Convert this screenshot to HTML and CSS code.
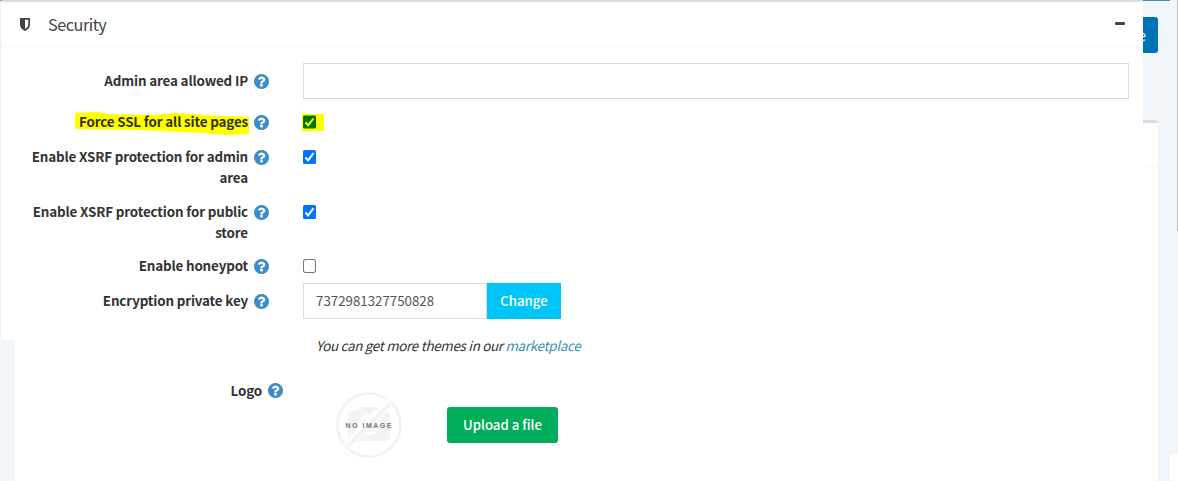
FILE: index.html
```html
<!DOCTYPE html>
<html lang="en">
<head>
<meta charset="utf-8">
<title>Security settings</title>
<link rel="stylesheet" href="styles.css">
</head>
<body>
<svg class="defs" width="0" height="0">
  <symbol id="help" viewBox="0 0 1536 1536"><path d="M896 1248v-192q0-14-9-23t-23-9H672q-14 0-23 9t-9 23v192q0 14 9 23t23 9h192q14 0 23-9t9-23zm256-672q0-88-55.500-163T958 297t-170-41q-243 0-371 213-15 24 8 42l132 100q7 6 19 6 16 0 25-12 53-68 86-92 34-24 86-24 48 0 85.500 26t37.500 59q0 38-20 61t-68 45q-63 28-115.500 86.500T640 892v36q0 14 9 23t23 9h192q14 0 23-9t9-23q0-19 21.500-49.500T972 829q32-18 49-28.500t46-35 44.500-48 28-60.500 12.500-81zm384 192q0 209-103 385.500T1153.500 1433 768 1536t-385.500-103T103 1153.500 0 768t103-385.500T382.500 103 768 0t385.500 103T1433 382.500 1536 768z" fill="#3c8dc5"/></symbol>
</svg>
<div class="page">
  <div class="topbar"></div>
  <div class="save">Save</div>
  <main class="card">
    <div class="card-head"></div>
    <div class="card-body">
      <p class="hint">You can get more themes in our <a class="link">marketplace</a></p>
      <div class="logo-row">
        <span class="label logo-label">Logo</span>
        <svg class="help"><use href="#help"/></svg>
        <svg class="noimage" viewBox="0 0 66 66">
          <circle cx="33" cy="33" r="31.500" fill="none" stroke="#f3f3f3" stroke-width="3"/>
          <path d="M12 23q0-4 4-4h3l3-4h20l3 4h5q4 0 4 4v22q0 4-4 4H16q-4 0-4-4z" fill="#f3f3f3"/>
          <circle cx="33" cy="33" r="9" fill="none" stroke="#fff" stroke-width="3"/>
          <path d="M10 54L54 10" stroke="#fff" stroke-width="9"/>
          <path d="M11 55L55 11" stroke="#f3f3f3" stroke-width="4"/>
          <text class="noimage-text" x="32.500" y="35.500" text-anchor="middle" textLength="46">NO IMAGE</text>
        </svg>
        <button class="upload">Upload a file</button>
      </div>
    </div>
  </main>
  <div class="scroll"></div>
</div>
<section class="panel">
  <header class="panel-head">
    <svg class="shield" viewBox="0 0 10 13"><path d="M0 0h10v6.500q0 4-5 6.500-5-2.500-5-6.500z" fill="#444"/><path d="M5 1.700h3.300v4.800q0 2.700-3.300 4.600z" fill="#fff"/></svg>
    <h1 class="title">Security</h1>
    <span class="minus"></span>
  </header>
  <div class="form">
    <div class="row row-input"><label class="label">Admin area allowed IP</label><svg class="help"><use href="#help"/></svg><div class="input wide"></div></div>
    <div class="row row-ssl"><label class="label"><svg class="marker" viewBox="0 0 175 24" preserveAspectRatio="none"><path d="M0 1L25 0 32 2 76 3 103 1 129 3 174 5V22L151 23 128 21 66 18 0 17z" fill="#ff0"/></svg><span class="marked">Force SSL for all site pages</span></label><svg class="help"><use href="#help"/></svg><span class="check-mark"><svg class="check" viewBox="0 0 13 13"><rect width="13" height="13" rx="1.500" fill="#007500"/><path d="M2.500 7l2.600 2.700L10.500 3" fill="none" stroke="#ff0" stroke-width="1.900"/></svg></span></div>
    <div class="row row-admin"><label class="label">Enable XSRF protection for admin<br>area</label><svg class="help"><use href="#help"/></svg><svg class="check" viewBox="0 0 13 13" preserveAspectRatio="none"><rect width="13" height="13" rx="1.500" fill="#0075ff"/><path d="M2.500 7l2.600 2.700L10.500 3" fill="none" stroke="#fff" stroke-width="1.900"/></svg></div>
    <div class="row row-public"><label class="label">Enable XSRF protection for public<br>store</label><svg class="help"><use href="#help"/></svg><svg class="check" viewBox="0 0 13 13" preserveAspectRatio="none"><rect width="13" height="13" rx="1.500" fill="#0075ff"/><path d="M2.500 7l2.600 2.700L10.500 3" fill="none" stroke="#fff" stroke-width="1.900"/></svg></div>
    <div class="row row-honey"><label class="label">Enable honeypot</label><svg class="help"><use href="#help"/></svg><svg class="check" viewBox="0 0 13 13" preserveAspectRatio="none"><rect x=".5" y=".5" width="12" height="12" rx="2" fill="#fff" stroke="#767676"/></svg></div>
    <div class="row row-key"><label class="label">Encryption private key</label><svg class="help"><use href="#help"/></svg><div class="group"><div class="input key">7372981327750828</div><button class="change">Change</button></div></div>
  </div>
</section>
</body>
</html>
```
FILE: styles.css
```css
* { box-sizing: border-box; }
body {
  margin: 0; width: 1178px; height: 481px; overflow: hidden; position: relative;
  font-family: "Noto Sans CJK SC", "Noto Sans", sans-serif;
  font-size: 13.400px; line-height: 21px; color: #333;
}
.defs { position: absolute; }
.page { height: 481px; background: #f1f6fa; display: flex; flex-direction: column; overflow: hidden; }
.topbar { height: 1px; width: 1170px; background: #3c8dbc; flex: none; }
.save {
  margin: 16px 0 0 1098px; width: 60px; height: 36px; flex: none;
  background: #0073b7; border-radius: 3px; color: #fff; line-height: 36px; text-align: right; padding-right: 12px;
}
.card {
  margin: 67px 20px 0 15px; flex: 1; background: #fff;
  border-top: 3px solid #d8dbe4; border-radius: 3px 3px 0 0;
}
.card-head { height: 44px; border-bottom: 1px solid #f7f7f7; }
.card-body { padding: 168px 0 0; }
.hint { margin: 0 0 0 301px; font-style: italic; letter-spacing: -.3px; white-space: nowrap; }
.link { color: #3c8dbc; }
.logo-row { display: flex; align-items: flex-start; padding-top: 24px; }
.label { font-weight: 700; text-align: right; white-space: nowrap; color: #333; letter-spacing: -.15px; }
.logo-label { width: 247px; margin-right: 6px; }
.help { width: 15px; height: 15px; margin-top: 3px; flex: none; }
.noimage { width: 66px; height: 66px; margin: 12px 0 0 53px; flex: none; }
.noimage-text { font: 700 7px "Liberation Sans", sans-serif; fill: #777; }
.upload {
  width: 111px; height: 36px; margin: 27px 0 0 45px; padding: 0; border: 0; border-radius: 3px;
  background: #00ad5b; color: #fff; font: 500 13.200px/36px "Noto Sans CJK SC", sans-serif;
}
.scroll {
  position: absolute; left: 1170px; top: 0; width: 8px; height: 481px;
  background: linear-gradient(#c1c1c1, #c1c1c1) 7px 0 / 1px 231px no-repeat, linear-gradient(#f3f6f9 454px, #fff 454px);
}
.panel {
  position: absolute; left: 0; top: 0; width: 1143px; height: 340px; background: #fff;
  border-top: 2px solid #d8dbe4; border-left: 1px solid #eef1f7; border-radius: 3px 0 0 3px;
}
.panel-head { height: 45px; border-bottom: 1px solid #f7f7f7; display: flex; align-items: center; padding: 0 18px 0 19px; }
.shield { width: 10px; height: 13px; }
.title { margin: 0 0 0 18px; font-size: 16.300px; font-weight: 400; line-height: 24px; color: #444; letter-spacing: -.5px; }
.minus { width: 10px; height: 3px; background: #444; margin: 0 0 1px auto; border-radius: 1px; }
.form { padding-top: 16px; }
.row { display: grid; grid-template-columns: 247px 15px 1fr; column-gap: 6px; align-items: start; }
.row > :nth-child(3) { margin-left: 28px; }
.row-input { height: 36px; }
.row-input .label, .row-key .label { padding-top: 7px; }
.row-input .help, .row-key .help { margin-top: 11px; }
.row-ssl { height: 21px; margin-top: 13px; }
.row-ssl .label { position: relative; top: -1px; }
.row-admin .label, .row-public .label, .row-honey .label { margin-top: -1px; }
.marker { position: absolute; left: 74px; top: 1px; width: 175px; height: 24px; }
.marked { position: relative; color: #333300; }
.row-ssl .help { margin-top: 3px; }
.check-mark { background: #ff0; width: 22px; height: 17px; margin-top: 2px; }
.check-mark .check { display: block; margin: 1px 0 0 1px; }
.row-ssl > .check-mark { margin-left: 27px; }
.check { width: 13px; height: 14px; margin-top: 3px; }
.row-admin { height: 42px; margin-top: 14px; }
.row-public { height: 42px; margin-top: 13px; }
.row-honey { height: 21px; margin-top: 12px; }
.row-key { height: 36px; margin-top: 6px; }
.input { height: 36px; border: 1px solid #d8dbe4; background: #fff; }
.wide { width: 826px; }
.group { display: flex; }
.key { width: 184px; padding-left: 12px; line-height: 34px; font-size: 13.300px; color: #555; }
.change {
  width: 74px; height: 36px; border: 0; padding: 0; background: #00c5f8; color: #fff;
  font: 500 13.200px/36px "Noto Sans CJK SC", sans-serif;
}
```
